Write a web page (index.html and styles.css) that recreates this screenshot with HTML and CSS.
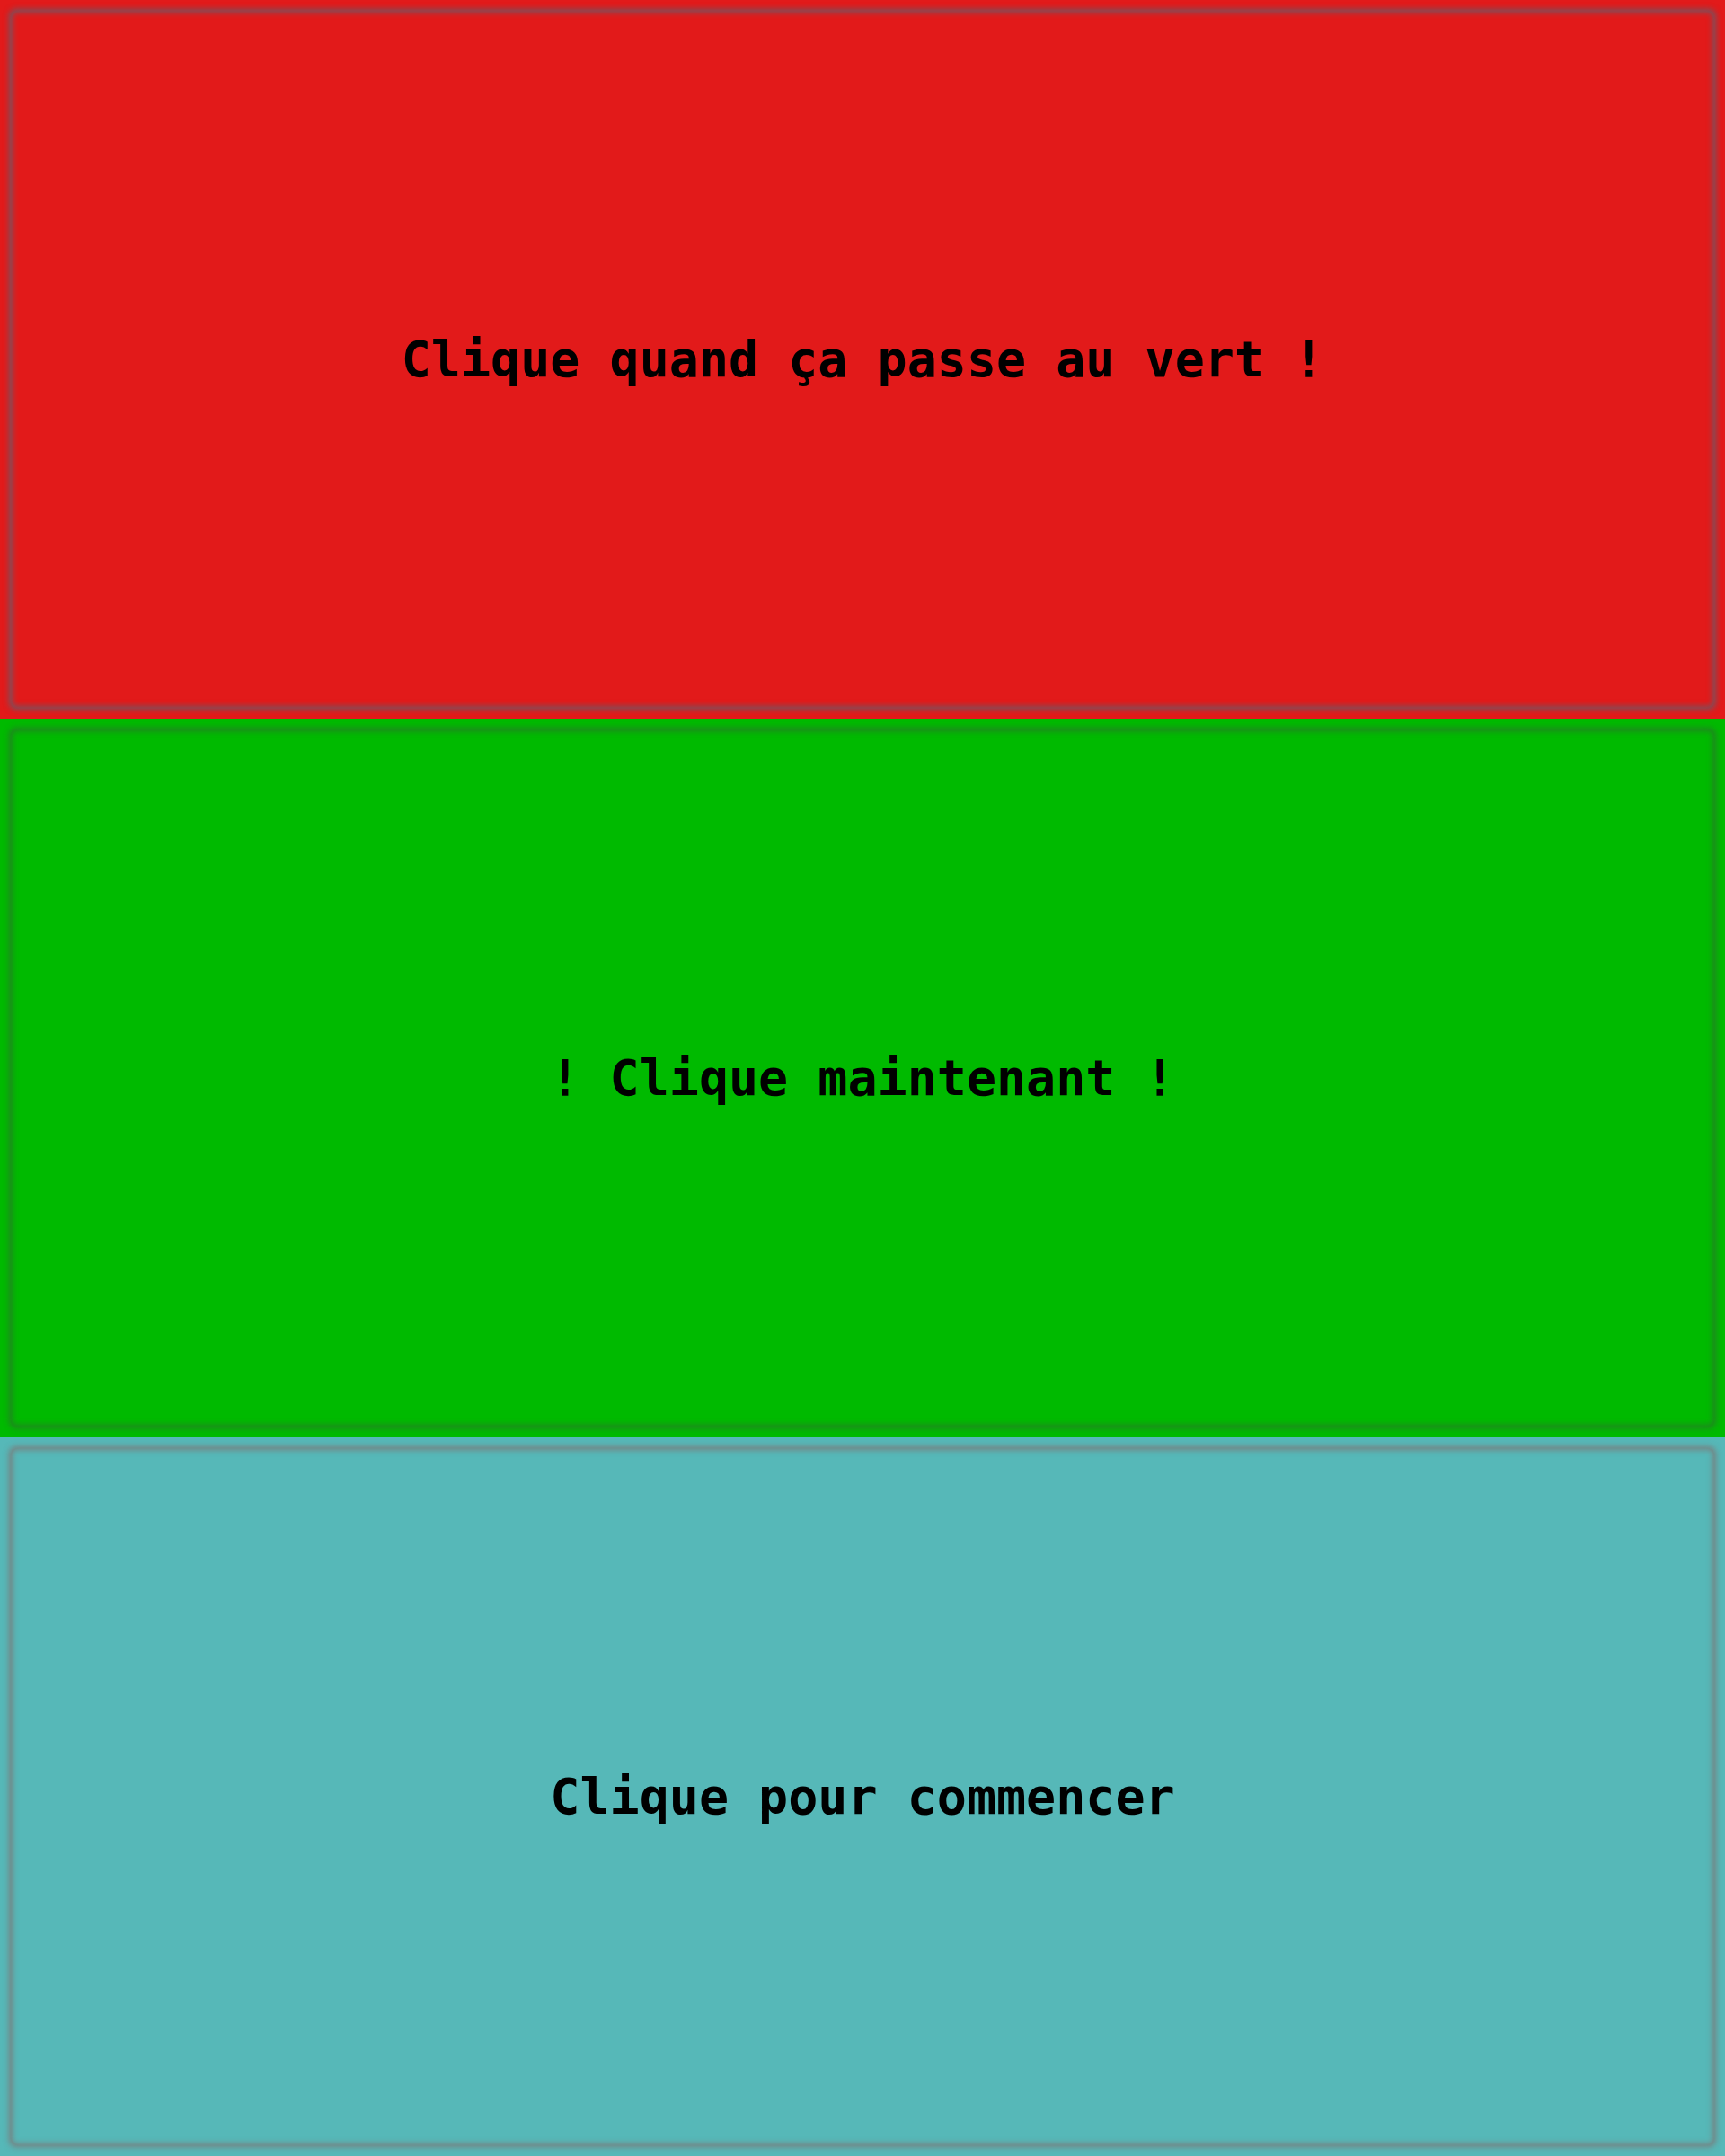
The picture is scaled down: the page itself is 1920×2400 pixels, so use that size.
FILE: index.html
```html
<!DOCTYPE html>
<html lang="fr">
<head>
<meta charset="utf-8">
<title>Réflexes</title>
<link rel="stylesheet" href="styles.css">
</head>
<body>
<div class="panel panel-red"><div class="frame"><span class="label">Clique quand ça passe au vert !</span></div></div>
<div class="panel panel-green"><div class="frame"><span class="label">! Clique maintenant !</span></div></div>
<div class="panel panel-teal"><div class="frame"><span class="label">Clique pour commencer</span></div></div>
</body>
</html>
```
FILE: styles.css
```css
html, body {
  margin: 0;
  padding: 0;
}
body {
  width: 1920px;
  font-family: "DejaVu Sans Mono", "Liberation Mono", monospace;
}
.panel {
  height: 800px;
  box-sizing: border-box;
  padding: 12px;
  display: flex;
}
.panel-red { background: #e21a1a; }
.panel-green { background: #00ba00; }
.panel-teal { background: #56b8b8; }
.frame {
  flex: 1;
  display: flex;
  align-items: center;
  justify-content: center;
  border-radius: 6px;
  box-shadow: 0 0 6px 2px rgba(95, 95, 110, 0.8), inset 0 0 6px 2px rgba(95, 95, 110, 0.8);
}
.panel-green .frame {
  box-shadow: 0 0 6px 2px rgba(40, 120, 40, 0.8), inset 0 0 6px 2px rgba(40, 120, 40, 0.8);
}
.panel-teal .frame {
  box-shadow: 0 0 6px 2px rgba(125, 120, 120, 0.85), inset 0 0 6px 2px rgba(125, 120, 120, 0.85);
}
.label {
  font-size: 55px;
  font-weight: bold;
  color: #000;
}
```
